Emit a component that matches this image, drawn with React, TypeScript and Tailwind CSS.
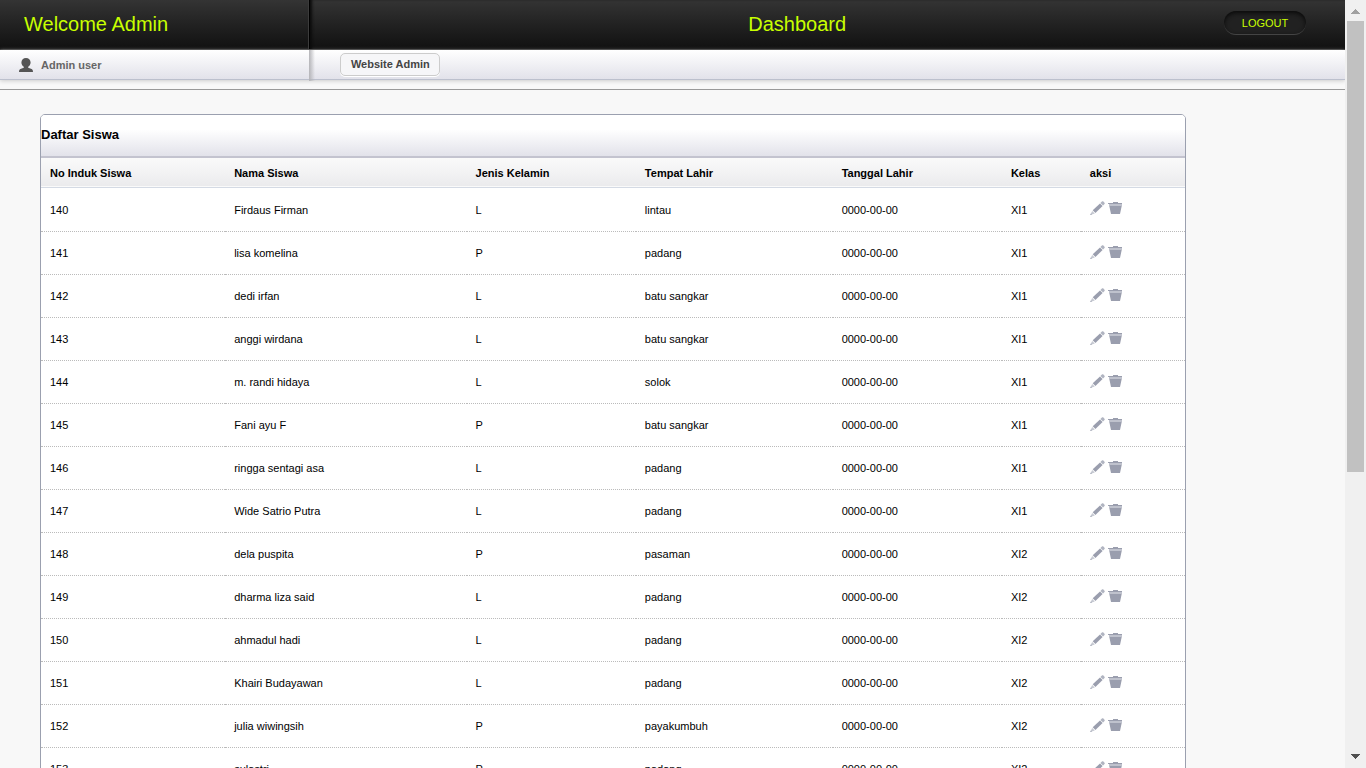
const columns = [
  { label: "No Induk Siswa", width: "w-[16.1%]" },
  { label: "Nama Siswa", width: "w-[21.1%]" },
  { label: "Jenis Kelamin", width: "w-[14.8%]" },
  { label: "Tempat Lahir", width: "w-[17.2%]" },
  { label: "Tanggal Lahir", width: "w-[14.8%]" },
  { label: "Kelas", width: "w-[6.9%]" },
  { label: "aksi", width: "w-[9.1%]" },
];

const students = [
  { id: 140, name: "Firdaus Firman", gender: "L", city: "lintau", born: "0000-00-00", kelas: "XI1" },
  { id: 141, name: "lisa komelina", gender: "P", city: "padang", born: "0000-00-00", kelas: "XI1" },
  { id: 142, name: "dedi irfan", gender: "L", city: "batu sangkar", born: "0000-00-00", kelas: "XI1" },
  { id: 143, name: "anggi wirdana", gender: "L", city: "batu sangkar", born: "0000-00-00", kelas: "XI1" },
  { id: 144, name: "m. randi hidaya", gender: "L", city: "solok", born: "0000-00-00", kelas: "XI1" },
  { id: 145, name: "Fani ayu F", gender: "P", city: "batu sangkar", born: "0000-00-00", kelas: "XI1" },
  { id: 146, name: "ringga sentagi asa", gender: "L", city: "padang", born: "0000-00-00", kelas: "XI1" },
  { id: 147, name: "Wide Satrio Putra", gender: "L", city: "padang", born: "0000-00-00", kelas: "XI1" },
  { id: 148, name: "dela puspita", gender: "P", city: "pasaman", born: "0000-00-00", kelas: "XI2" },
  { id: 149, name: "dharma liza said", gender: "L", city: "padang", born: "0000-00-00", kelas: "XI2" },
  { id: 150, name: "ahmadul hadi", gender: "L", city: "padang", born: "0000-00-00", kelas: "XI2" },
  { id: 151, name: "Khairi Budayawan", gender: "L", city: "padang", born: "0000-00-00", kelas: "XI2" },
  { id: 152, name: "julia wiwingsih", gender: "P", city: "payakumbuh", born: "0000-00-00", kelas: "XI2" },
  { id: 153, name: "sulastri", gender: "P", city: "padang", born: "0000-00-00", kelas: "XI2" },
];

function UserIcon() {
  return (
    <svg width="14" height="14" viewBox="0 0 14 14" fill="#555" aria-hidden="true">
      <path d="M7 0C4.300 0 2.400 1.900 2.400 4.500c0 1.900 1 3.500 2.400 4.300v.9L1.400 10.900C.5 11.300 0 12.200 0 14h14c0-1.800-.5-2.700-1.400-3.100L9.200 9.700v-.9c1.400-.8 2.400-2.400 2.400-4.300C11.600 1.900 9.700 0 7 0z" />
    </svg>
  );
}

function PencilIcon() {
  return (
    <svg width="16" height="16" viewBox="0 0 16 16" aria-hidden="true">
      <path d="M2.700 10.300 10 3.400l2.600 2.700-7.200 6.900z" fill="#9a9eae" />
      <path d="M10.400 2.900 11.900 1.500c.5-.5 1-.5 1.500 0l1.100 1.200c.4.400.4.900 0 1.300L13.100 5.600z" fill="#b0b4c1" />
      <path d="M2.200 10.900.2 15l4.600-1.500z" fill="#c6c9d2" />
      <path d="M.9 13.400.2 15l1.800-.6z" fill="#9a9eae" />
    </svg>
  );
}

function TrashIcon() {
  return (
    <svg width="16" height="16" viewBox="0 0 16 16" aria-hidden="true">
      <path d="M5 2h5v1h4v1H0V3h5z" fill="#9a9eae" />
      <path d="M1 4h13v2H1z" fill="#bfc2cd" />
      <path d="M1.300 6h12.400l-1.700 8H3z" fill="#9a9eae" />
    </svg>
  );
}

function Scrollbar() {
  return (
    <div className="flex w-[21px] shrink-0 flex-col items-center bg-[#f0f0f0]" aria-hidden="true">
      <div className="flex h-[21px] shrink-0 items-center pt-0.5">
        <svg width="9" height="5" viewBox="0 0 9 5" fill="#a0a0a0" shapeRendering="crispEdges">
          <path d="M4 0h1v1h1v1h1v1h1v1h1v1H0V4h1V3h1V2h1V1h1z" />
        </svg>
      </div>
      <div className="h-[451px] w-[17px] bg-[#c1c1c1]" />
      <div className="mt-auto flex h-6 shrink-0 items-center">
        <svg width="9" height="5" viewBox="0 0 9 5" fill="#505050" shapeRendering="crispEdges">
          <path d="M0 0h9v1H8v1H7v1H6v1H5v1H4V4H3V3H2V2H1V1H0z" />
        </svg>
      </div>
    </div>
  );
}

export default function App() {
  return (
    <div className="flex h-screen overflow-hidden bg-[#f8f8f8] font-['Liberation_Sans',Arial,sans-serif] text-[11px] text-black">
      <div className="min-w-0 flex-1 overflow-hidden">
        <header className="flex h-[50px] items-start border-b border-[#2b2b2b] bg-linear-to-b from-[#343434] to-[#111] text-[#c8ff00]">
          <h1 className="h-full w-[23%] shrink-0 border-r border-[#3c3c3c] pl-6 text-xl leading-[48px]">Welcome Admin</h1>
          <div className="flex h-full flex-1 items-start border-l border-black pr-[39px] pl-[60px] shadow-[inset_3px_0_3px_-1px_#0c0c0c]">
            <h2 className="flex-1 text-center text-xl leading-[48px]">Dashboard</h2>
            <a
              href="#logout"
              className="mt-[11px] flex h-6 w-[82px] items-center justify-center rounded-full border-b border-[#444] bg-[#212121] pt-0.5 shadow-[inset_0_2px_4px_#0a0a0a]"
            >
              LOGOUT
            </a>
          </div>
        </header>

        <div className="flex h-[30px] border-b border-[#bcc0cd] bg-linear-to-b from-white to-[#e2e2ea] font-bold shadow-[0_1px_4px_#ccc]">
          <div className="flex w-[23%] shrink-0 items-center gap-2 pl-[19px] text-[#666]">
            <UserIcon />
            <p className="pt-0.5">Admin user</p>
          </div>
          <div className="-mb-0.5 w-1.5 bg-linear-to-r from-[#b4b4b8] to-transparent" />
          <div className="flex items-center pl-[25px]">
            <a
              href="#admin"
              className="flex h-[23px] w-[100px] items-center justify-center rounded-[5px] border border-[#ccc] bg-[#f6f6f8] text-[#444] shadow-[0_1px_0_#fff]"
            >
              Website Admin
            </a>
          </div>
        </div>

        <hr className="mt-[9px] border-[#999]" />

        <main className="mt-6 mr-[159px] ml-10 overflow-hidden rounded-[5px] border border-[#9ba0af] bg-white">
          <h3 className="h-[43px] border-b-2 border-[#c3c3cf] bg-linear-to-b from-white from-35% to-[#e2e2ea] text-[13px] leading-[39px] font-bold">
            Daftar Siswa
          </h3>
          <table className="w-full table-fixed border-collapse text-left">
            <thead>
              <tr className="h-[29px] border-b border-[#d4dae4] bg-linear-to-b from-[#fafafa] to-[#ebebed]">
                {columns.map((col) => (
                  <th key={col.label} scope="col" className={`pt-0.5 pl-[9px] font-bold ${col.width}`}>
                    {col.label}
                  </th>
                ))}
              </tr>
            </thead>
            <tbody>
              {students.map((s) => (
                <tr key={s.id} className="h-[43px] border-b border-dotted border-[#bbb] first:h-11">
                  <td className="pt-0.5 pl-[9px]">{s.id}</td>
                  <td className="pt-0.5 pl-[9px]">{s.name}</td>
                  <td className="pt-0.5 pl-[9px]">{s.gender}</td>
                  <td className="pt-0.5 pl-[9px]">{s.city}</td>
                  <td className="pt-0.5 pl-[9px]">{s.born}</td>
                  <td className="pt-0.5 pl-[9px]">{s.kelas}</td>
                  <td className="pb-0.5 pl-[9px]">
                    <div className="flex gap-0.5">
                      <button type="button" aria-label={`Edit ${s.name}`}>
                        <PencilIcon />
                      </button>
                      <button type="button" aria-label={`Hapus ${s.name}`}>
                        <TrashIcon />
                      </button>
                    </div>
                  </td>
                </tr>
              ))}
            </tbody>
          </table>
        </main>
      </div>

      <Scrollbar />
    </div>
  );
}
